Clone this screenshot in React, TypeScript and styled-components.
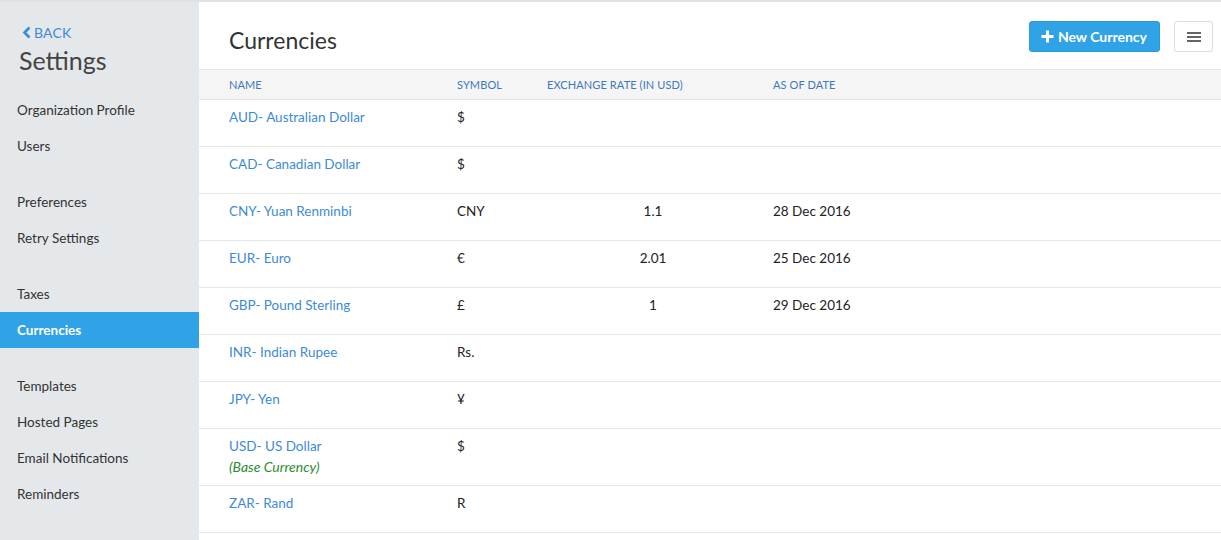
import React from "react";
import styled, { createGlobalStyle } from "styled-components";

const GlobalStyle = createGlobalStyle`
  html, body {
    margin: 0;
    padding: 0;
    background: #fff;
  }
  body {
    font-family: Lato, "Open Sans", "Liberation Sans", sans-serif;
    color: #333;
    -webkit-font-smoothing: antialiased;
  }
  * {
    box-sizing: border-box;
  }
`;

const Page = styled.div`
  display: flex;
  width: 1221px;
  height: 540px;
  border-top: 2px solid #e2e2e2;
  overflow: hidden;
`;

const Sidebar = styled.aside`
  width: 199px;
  flex-shrink: 0;
  background: #e4e8eb;
  padding-top: 20px;
`;

const BackLink = styled.a`
  display: flex;
  align-items: center;
  gap: 2px;
  margin-left: 22px;
  height: 20px;
  font-size: 14px;
  color: #3d8bd5;
  text-decoration: none;
  letter-spacing: 0.2px;
`;

const SideTitle = styled.h1`
  margin: 2px 0 0 19px;
  font-size: 25px;
  line-height: 32px;
  font-weight: 400;
  color: #444;
`;

const NavGroup = styled.nav`
  display: flex;
  flex-direction: column;
  margin-top: 16px;
  & + & {
    margin-top: 20px;
  }
`;

const NavItem = styled.div<{ $active?: boolean }>`
  height: 36px;
  display: flex;
  align-items: center;
  padding-left: 17px;
  font-size: 13.5px;
  color: ${({ $active }) => ($active ? "#fff" : "#333")};
  background: ${({ $active }) => ($active ? "#2fa3e6" : "transparent")};
  font-weight: ${({ $active }) => ($active ? 700 : 400)};
`;

const Main = styled.main`
  flex: 1;
  display: flex;
  flex-direction: column;
`;

const Header = styled.header`
  height: 67px;
  display: flex;
  align-items: center;
  justify-content: space-between;
  padding: 0 8px 0 30px;
`;

const Title = styled.h2`
  margin: 8px 0 0;
  font-size: 23px;
  font-weight: 400;
  color: #333;
`;

const Actions = styled.div`
  display: flex;
  align-items: center;
  gap: 14px;
  margin-top: 2px;
`;

const PrimaryButton = styled.button`
  display: flex;
  align-items: center;
  gap: 4px;
  height: 31px;
  padding: 0 12px 0 11px;
  border: 1px solid #2a9ad9;
  border-radius: 3px;
  background: #2fa3e6;
  color: #fff;
  font-family: inherit;
  font-size: 14px;
  font-weight: 700;
  cursor: pointer;
`;

const IconButton = styled.button`
  width: 39px;
  height: 31px;
  display: flex;
  align-items: center;
  justify-content: center;
  border: 1px solid #dcdcdc;
  border-radius: 3px;
  background: #fff;
  padding: 0;
  cursor: pointer;
`;

const cols = "228px 90px 226px 1fr";

const TableHead = styled.div`
  display: grid;
  grid-template-columns: ${cols};
  height: 31px;
  align-items: center;
  padding-left: 30px;
  background: #f5f5f5;
  border-top: 1px solid #e6e6e6;
  border-bottom: 1px solid #e6e6e6;
`;

const HeadCell = styled.div`
  font-size: 11px;
  color: #3f78b8;
  text-transform: uppercase;
  letter-spacing: 0.1px;
`;

const Row = styled.div`
  display: grid;
  grid-template-columns: ${cols};
  padding: 8px 0 10px 30px;
  min-height: 47px;
  border-bottom: 1px solid #e6e6e6;
  font-size: 13.5px;
  line-height: 18px;
`;

const NameCell = styled.div`
  display: flex;
  flex-direction: column;
`;

const NameLink = styled.a`
  color: #3d8bd5;
  text-decoration: none;
`;

const BaseNote = styled.span`
  margin: 2px 0 -2px;
  line-height: 20px;
  font-style: italic;
  font-size: 14px;
  color: #2f8a2f;
`;

const Cell = styled.div<{ $center?: boolean }>`
  color: #222;
  text-align: ${({ $center }) => ($center ? "center" : "left")};
  padding-right: ${({ $center }) => ($center ? "14px" : "0")};
`;

type Currency = {
  name: string;
  symbol: string;
  rate?: string;
  date?: string;
  base?: boolean;
};

const currencies: Currency[] = [
  { name: "AUD- Australian Dollar", symbol: "$" },
  { name: "CAD- Canadian Dollar", symbol: "$" },
  { name: "CNY- Yuan Renminbi", symbol: "CNY", rate: "1.1", date: "28 Dec 2016" },
  { name: "EUR- Euro", symbol: "€", rate: "2.01", date: "25 Dec 2016" },
  { name: "GBP- Pound Sterling", symbol: "£", rate: "1", date: "29 Dec 2016" },
  { name: "INR- Indian Rupee", symbol: "Rs." },
  { name: "JPY- Yen", symbol: "¥" },
  { name: "USD- US Dollar", symbol: "$", base: true },
  { name: "ZAR- Rand", symbol: "R" },
];

const navGroups = [
  ["Organization Profile", "Users"],
  ["Preferences", "Retry Settings"],
  ["Taxes", "Currencies"],
  ["Templates", "Hosted Pages", "Email Notifications", "Reminders"],
];

const App: React.FC = () => {
  return (
    <>
      <GlobalStyle />
      <Page>
        <Sidebar>
          <BackLink href="#">
            <svg width="10" height="13" viewBox="0 0 10 13">
              <path d="M7.5 1.5 L2.5 6.5 L7.5 11.5" fill="none" stroke="#3d8bd5" strokeWidth="2.6" />
            </svg>
            BACK
          </BackLink>
          <SideTitle>Settings</SideTitle>
          {navGroups.map((group, i) => (
            <NavGroup key={i}>
              {group.map((item) => (
                <NavItem key={item} $active={item === "Currencies"}>
                  {item}
                </NavItem>
              ))}
            </NavGroup>
          ))}
        </Sidebar>
        <Main>
          <Header>
            <Title>Currencies</Title>
            <Actions>
              <PrimaryButton>
                <svg width="13" height="13" viewBox="0 0 13 13">
                  <path d="M6.5 0.5 V12.5 M0.5 6.5 H12.5" stroke="#fff" strokeWidth="3" />
                </svg>
                New Currency
              </PrimaryButton>
              <IconButton aria-label="menu">
                <svg width="14" height="10" viewBox="0 0 14 10">
                  <path d="M0 1 H14 M0 5 H14 M0 9 H14" stroke="#333" strokeWidth="1.6" />
                </svg>
              </IconButton>
            </Actions>
          </Header>
          <TableHead>
            <HeadCell>Name</HeadCell>
            <HeadCell>Symbol</HeadCell>
            <HeadCell>Exchange Rate (in USD)</HeadCell>
            <HeadCell>As of Date</HeadCell>
          </TableHead>
          {currencies.map((c) => (
            <Row key={c.name}>
              <NameCell>
                <NameLink href="#">{c.name}</NameLink>
                {c.base && <BaseNote>(Base Currency)</BaseNote>}
              </NameCell>
              <Cell>{c.symbol}</Cell>
              <Cell $center>{c.rate}</Cell>
              <Cell>{c.date}</Cell>
            </Row>
          ))}
        </Main>
      </Page>
    </>
  );
};

export default App;
